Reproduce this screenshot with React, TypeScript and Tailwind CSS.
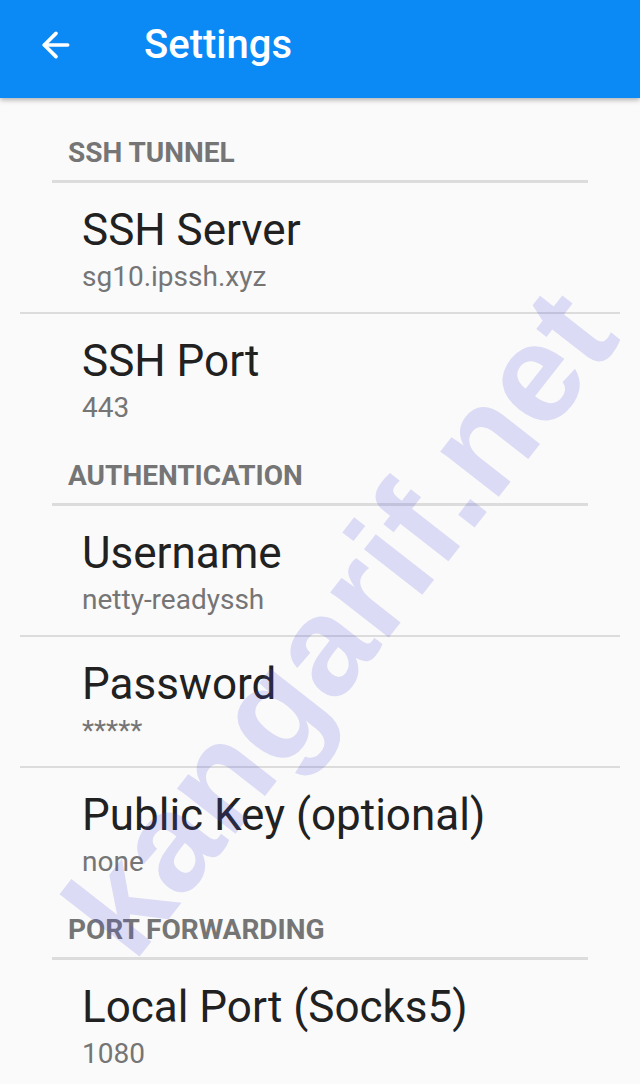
import { ArrowLeft } from "lucide-react";

type Pref = { title: string; summary: string };
type Section = { name: string; items: Pref[] };

const sections: Section[] = [
  {
    name: "SSH TUNNEL",
    items: [
      { title: "SSH Server", summary: "sg10.ipssh.xyz" },
      { title: "SSH Port", summary: "443" },
    ],
  },
  {
    name: "AUTHENTICATION",
    items: [
      { title: "Username", summary: "netty-readyssh" },
      { title: "Password", summary: "*****" },
      { title: "Public Key (optional)", summary: "none" },
    ],
  },
  {
    name: "PORT FORWARDING",
    items: [{ title: "Local Port (Socks5)", summary: "1080" }],
  },
];

function SectionHeader({ name }: { name: string }) {
  return (
    <div className="pt-[18px]">
      <div className="px-[68px] text-[28px] leading-[30px] font-bold text-[#757575]">{name}</div>
      <div className="mx-[52px] mt-[12px] h-[3px] bg-[#dcdcdc]" />
    </div>
  );
}

function PrefRow({ pref }: { pref: Pref }) {
  return (
    <div className="h-[129px] px-[82px] pt-[22px]">
      <div className="text-[44px] leading-[50px] text-[#212121]">{pref.title}</div>
      <div className="mt-[6px] text-[28px] leading-[32px] text-[#757575]">{pref.summary}</div>
    </div>
  );
}

export default function App() {
  return (
    <div
      className="relative h-[1084px] w-[640px] overflow-hidden bg-[#fafafa]"
      style={{ fontFamily: "Roboto, 'Noto Sans', sans-serif" }}
    >
      <div className="relative z-10 flex h-[98px] items-center pb-[8px] bg-[#0b89f5] shadow-[0_2px_5px_rgba(0,0,0,0.3)]">
        <ArrowLeft className="ml-[36px] h-[40px] w-[40px] text-white" strokeWidth={2.2} />
        <div className="ml-[68px] text-[40px] font-medium text-white">Settings</div>
      </div>

      <div className="pt-[22px]">
        {sections.map((s) => (
          <div key={s.name}>
            <SectionHeader name={s.name} />
            {s.items.map((p, i) => (
              <div key={p.title}>
                {i > 0 && <div className="mx-[20px] h-[2px] bg-[#dcdcdc]" />}
                <PrefRow pref={p} />
              </div>
            ))}
          </div>
        ))}
      </div>

      <div
        className="pointer-events-none absolute left-[340px] top-[622px] z-20 -translate-x-1/2 -translate-y-1/2 -rotate-[52deg] whitespace-nowrap text-[140px] font-bold leading-none text-[rgba(80,80,230,0.18)]"
        style={{ fontFamily: "'Liberation Sans', Arial, sans-serif" }}
      >
        kangarif.net
      </div>
    </div>
  );
}
